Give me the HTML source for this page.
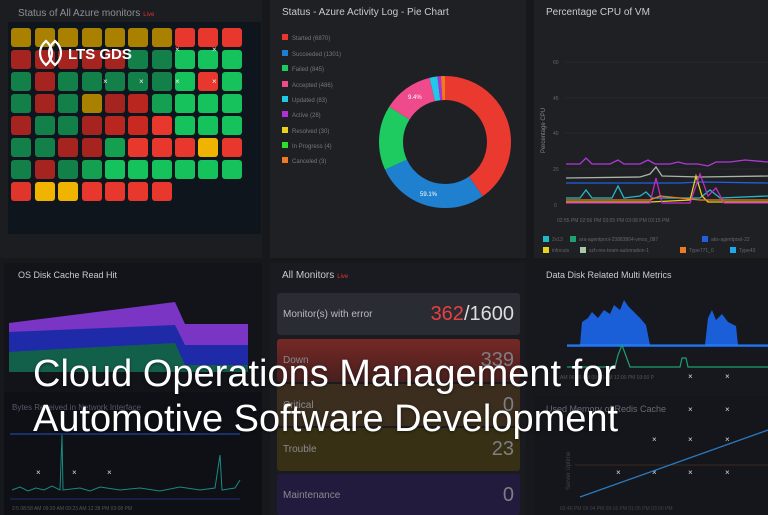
<!DOCTYPE html>
<html><head><meta charset="utf-8"><style>
*{margin:0;padding:0;box-sizing:border-box}
body{width:768px;height:515px;overflow:hidden;background:#17181c;font-family:"Liberation Sans",sans-serif;position:relative}
.p{position:absolute;background:#1f2024}
.t{position:absolute;color:#c9cacf;font-size:10px;white-space:nowrap}
.live{color:#d33;font-size:6px;margin-left:3px}
.mon{position:absolute;left:277px;width:243px;color:#8a8a90;font-size:10px;border-radius:3px}
.mon span{position:absolute;left:6px;top:16px}
.mon b{position:absolute;right:6px;top:10px;font-weight:normal;font-size:20px;color:#7e7e84}
.h{position:absolute;left:33px;color:#fff;font-size:38px;letter-spacing:0;line-height:1;white-space:nowrap;text-shadow:0 1px 3px rgba(0,0,0,.5)}
</style></head><body>
<div class="p" style="left:0;top:0;width:262px;height:258px;background:#1c1d21"></div>
<div class="p" style="left:8px;top:22px;width:253px;height:212px;background:#0f151c"></div>
<div class="t" style="left:18px;top:8px;color:#8e9099">Status of All Azure monitors<span class="live">Live</span></div>
<div class="p" style="left:270px;top:0;width:256px;height:258px"></div>
<div class="t" style="left:282px;top:7px">Status - Azure Activity Log - Pie Chart</div>
<div class="p" style="left:534px;top:0;width:234px;height:258px"></div>
<div class="t" style="left:546px;top:7px">Percentage CPU of VM</div>
<div class="p" style="left:4px;top:263px;width:258px;height:252px;background:#121419"></div>
<div class="t" style="left:18px;top:270px;font-size:9px">OS Disk Cache Read Hit</div>
<div class="p" style="left:4px;top:392px;width:258px;height:123px;background:#0e1016"></div>
<div class="t" style="left:12px;top:403px;font-size:8px;color:#555a66">Bytes Received in Network Interface</div>
<div class="p" style="left:270px;top:263px;width:256px;height:252px;background:#1a1b20"></div>
<div class="t" style="left:282px;top:270px">All Monitors<span class="live">Live</span></div>
<div class="p" style="left:534px;top:263px;width:234px;height:130px;background:#17181d"></div>
<div class="t" style="left:546px;top:270px;font-size:9px">Data Disk Related Multi Metrics</div>
<div class="p" style="left:534px;top:396px;width:234px;height:119px;background:#15161b"></div>
<div class="t" style="left:546px;top:404px;font-size:9px;color:#666a75">Used Memory of Redis Cache</div>

<div class="mon" style="top:293px;height:42px;background:#2a2c33;color:#bbb"><span>Monitor(s) with error</span><b style="color:#ddd"><i style="font-style:normal;color:#e84040">362</i>/1600</b></div>
<div class="mon" style="top:339px;height:43px;background:linear-gradient(#762824,#46201e)"><span>Down</span><b>339</b></div>
<div class="mon" style="top:384px;height:42px;background:#3c2e1e"><span>Critical</span><b>0</b></div>
<div class="mon" style="top:428px;height:43px;background:#373015"><span>Trouble</span><b>23</b></div>
<div class="mon" style="top:474px;height:41px;background:#221b3e"><span>Maintenance</span><b>0</b></div>

<svg style="position:absolute;left:0;top:0" width="768" height="515">
<g>
<rect x="11" y="28" width="20" height="19" rx="3" fill="#a98000"/><rect x="35" y="28" width="20" height="19" rx="3" fill="#a98000"/><rect x="58" y="28" width="20" height="19" rx="3" fill="#a98000"/><rect x="82" y="28" width="20" height="19" rx="3" fill="#a98000"/><rect x="105" y="28" width="20" height="19" rx="3" fill="#a98000"/><rect x="128" y="28" width="20" height="19" rx="3" fill="#a98000"/><rect x="152" y="28" width="20" height="19" rx="3" fill="#a98000"/><rect x="175" y="28" width="20" height="19" rx="3" fill="#e8372c"/><rect x="198" y="28" width="20" height="19" rx="3" fill="#e8372c"/><rect x="222" y="28" width="20" height="19" rx="3" fill="#e8372c"/>
<rect x="11" y="50" width="20" height="19" rx="3" fill="#a52420"/><rect x="35" y="50" width="20" height="19" rx="3" fill="#a52420"/><rect x="58" y="50" width="20" height="19" rx="3" fill="#a52420"/><rect x="82" y="50" width="20" height="19" rx="3" fill="#a52420"/><rect x="105" y="50" width="20" height="19" rx="3" fill="#a52420"/><rect x="128" y="50" width="20" height="19" rx="3" fill="#13804a"/><rect x="152" y="50" width="20" height="19" rx="3" fill="#13804a"/><rect x="175" y="50" width="20" height="19" rx="3" fill="#16c25c"/><rect x="198" y="50" width="20" height="19" rx="3" fill="#16c25c"/><rect x="222" y="50" width="20" height="19" rx="3" fill="#16c25c"/>
<rect x="11" y="72" width="20" height="19" rx="3" fill="#13804a"/><rect x="35" y="72" width="20" height="19" rx="3" fill="#a52420"/><rect x="58" y="72" width="20" height="19" rx="3" fill="#13804a"/><rect x="82" y="72" width="20" height="19" rx="3" fill="#13804a"/><rect x="105" y="72" width="20" height="19" rx="3" fill="#13804a"/><rect x="128" y="72" width="20" height="19" rx="3" fill="#13804a"/><rect x="152" y="72" width="20" height="19" rx="3" fill="#13804a"/><rect x="175" y="72" width="20" height="19" rx="3" fill="#16c25c"/><rect x="198" y="72" width="20" height="19" rx="3" fill="#e8372c"/><rect x="222" y="72" width="20" height="19" rx="3" fill="#16c25c"/>
<rect x="11" y="94" width="20" height="19" rx="3" fill="#13804a"/><rect x="35" y="94" width="20" height="19" rx="3" fill="#a52420"/><rect x="58" y="94" width="20" height="19" rx="3" fill="#13804a"/><rect x="82" y="94" width="20" height="19" rx="3" fill="#a98000"/><rect x="105" y="94" width="20" height="19" rx="3" fill="#a52420"/><rect x="128" y="94" width="20" height="19" rx="3" fill="#b8261f"/><rect x="152" y="94" width="20" height="19" rx="3" fill="#14a050"/><rect x="175" y="94" width="20" height="19" rx="3" fill="#16c25c"/><rect x="198" y="94" width="20" height="19" rx="3" fill="#16c25c"/><rect x="222" y="94" width="20" height="19" rx="3" fill="#16c25c"/>
<rect x="11" y="116" width="20" height="19" rx="3" fill="#a52420"/><rect x="35" y="116" width="20" height="19" rx="3" fill="#13804a"/><rect x="58" y="116" width="20" height="19" rx="3" fill="#13804a"/><rect x="82" y="116" width="20" height="19" rx="3" fill="#a52420"/><rect x="105" y="116" width="20" height="19" rx="3" fill="#b8261f"/><rect x="128" y="116" width="20" height="19" rx="3" fill="#c82a22"/><rect x="152" y="116" width="20" height="19" rx="3" fill="#e8372c"/><rect x="175" y="116" width="20" height="19" rx="3" fill="#16c25c"/><rect x="198" y="116" width="20" height="19" rx="3" fill="#16c25c"/><rect x="222" y="116" width="20" height="19" rx="3" fill="#16c25c"/>
<rect x="11" y="138" width="20" height="19" rx="3" fill="#13804a"/><rect x="35" y="138" width="20" height="19" rx="3" fill="#13804a"/><rect x="58" y="138" width="20" height="19" rx="3" fill="#a52420"/><rect x="82" y="138" width="20" height="19" rx="3" fill="#a52420"/><rect x="105" y="138" width="20" height="19" rx="3" fill="#14a050"/><rect x="128" y="138" width="20" height="19" rx="3" fill="#e8372c"/><rect x="152" y="138" width="20" height="19" rx="3" fill="#e8372c"/><rect x="175" y="138" width="20" height="19" rx="3" fill="#e8372c"/><rect x="198" y="138" width="20" height="19" rx="3" fill="#f0b400"/><rect x="222" y="138" width="20" height="19" rx="3" fill="#e8372c"/>
<rect x="11" y="160" width="20" height="19" rx="3" fill="#13804a"/><rect x="35" y="160" width="20" height="19" rx="3" fill="#a52420"/><rect x="58" y="160" width="20" height="19" rx="3" fill="#13804a"/><rect x="82" y="160" width="20" height="19" rx="3" fill="#14a050"/><rect x="105" y="160" width="20" height="19" rx="3" fill="#16c25c"/><rect x="128" y="160" width="20" height="19" rx="3" fill="#16c25c"/><rect x="152" y="160" width="20" height="19" rx="3" fill="#16c25c"/><rect x="175" y="160" width="20" height="19" rx="3" fill="#16c25c"/><rect x="198" y="160" width="20" height="19" rx="3" fill="#16c25c"/><rect x="222" y="160" width="20" height="19" rx="3" fill="#16c25c"/>
<rect x="11" y="182" width="20" height="19" rx="3" fill="#e0352a"/><rect x="35" y="182" width="20" height="19" rx="3" fill="#f0b400"/><rect x="58" y="182" width="20" height="19" rx="3" fill="#f0b400"/><rect x="82" y="182" width="20" height="19" rx="3" fill="#e8372c"/><rect x="105" y="182" width="20" height="19" rx="3" fill="#e8372c"/><rect x="128" y="182" width="20" height="19" rx="3" fill="#e8372c"/><rect x="152" y="182" width="20" height="19" rx="3" fill="#e8372c"/>
</g>
<g fill="#eee" font-size="8"><text x="175" y="52">×</text><text x="212" y="52">×</text><text x="103" y="84">×</text><text x="139" y="84">×</text><text x="175" y="84">×</text><text x="212" y="84">×</text></g>
<g fill="none" stroke="#fff" stroke-width="2.2">
<path d="M46 41 C38 48 38 58 46 65 C54 58 54 48 46 41Z"/>
<path d="M55 41 C47 48 47 58 55 65 C63 58 63 48 55 41Z"/>
</g>
<text x="68" y="59" fill="#fff" font-size="15" font-weight="bold">LTS GDS</text>

<g font-size="6" fill="#777">
<rect x="282" y="34" width="6" height="6" fill="#e8372c"/><text x="292" y="40">Started (6870)</text>
<rect x="282" y="50" width="6" height="6" fill="#1e7fd0"/><text x="292" y="56">Succeeded (1301)</text>
<rect x="282" y="65" width="6" height="6" fill="#1ecb60"/><text x="292" y="71">Failed (845)</text>
<rect x="282" y="81" width="6" height="6" fill="#ef4b8c"/><text x="292" y="87">Accepted (486)</text>
<rect x="282" y="96" width="6" height="6" fill="#22c8e8"/><text x="292" y="102">Updated (83)</text>
<rect x="282" y="111" width="6" height="6" fill="#b02fd8"/><text x="292" y="117">Active (28)</text>
<rect x="282" y="127" width="6" height="6" fill="#e8d21e"/><text x="292" y="133">Resolved (30)</text>
<rect x="282" y="142" width="6" height="6" fill="#2ee02e"/><text x="292" y="148">In Progress (4)</text>
<rect x="282" y="157" width="6" height="6" fill="#f07a22"/><text x="292" y="163">Canceled (3)</text>
</g>
<g transform="translate(445,142) rotate(-90)" fill="none" stroke-width="24">
<circle r="54" stroke="#ea3a30" stroke-dasharray="136.7 400"/>
<circle r="54" stroke="#1f80cf" stroke-dasharray="94.2 400" stroke-dashoffset="-136.7"/>
<circle r="54" stroke="#1ecb60" stroke-dasharray="53.7 400" stroke-dashoffset="-230.9"/>
<circle r="54" stroke="#ef4b8c" stroke-dasharray="41.5 400" stroke-dashoffset="-284.6"/>
<circle r="54" stroke="#22c8e8" stroke-dasharray="6.6 400" stroke-dashoffset="-326.1"/>
<circle r="54" stroke="#b02fd8" stroke-dasharray="2.8 400" stroke-dashoffset="-332.7"/>
<circle r="54" stroke="#f07a22" stroke-dasharray="3.8 400" stroke-dashoffset="-335.5"/>
</g>
<text x="408" y="99" fill="#fff" font-size="6">9.4%</text>
<text x="420" y="196" fill="#fff" font-size="6">59.1%</text>

<g stroke="#2e2f35" stroke-width="0.5">
<line x1="565" y1="62" x2="768" y2="62"/><line x1="565" y1="98" x2="768" y2="98"/><line x1="565" y1="133" x2="768" y2="133"/><line x1="565" y1="169" x2="768" y2="169"/>
</g>
<g font-size="5" fill="#666"><text x="553" y="64">60</text><text x="553" y="100">45</text><text x="553" y="135">40</text><text x="553" y="171">20</text><text x="554" y="207">0</text>
<text x="557" y="222">02:55 PM   02:56 PM   03:05 PM   03:08 PM   03:15 PM</text></g>
<text transform="translate(545,153) rotate(-90)" font-size="6" fill="#888">Percentage CPU</text>
<g fill="none" stroke-width="1.3">
<polyline stroke="#b038d8" points="566,164 580,164 586,158 592,164 610,164 618,160 624,164 640,164 648,160 655,164 670,164 678,162 686,164 698,164 708,166 716,162 730,162 745,160 768,162"/>
<polyline stroke="#aab3a8" points="566,178 640,177 650,174 656,167 662,176 700,177 768,176"/>
<polyline stroke="#2060e0" points="566,183 640,183 680,183 700,182 768,183"/>
<polyline stroke="#22b8c8" points="566,198 580,198 586,190 592,198 612,198 618,186 624,198 640,196 646,192 652,198 700,198 710,190 720,198 768,196"/>
<polyline stroke="#e8d21e" points="566,202 650,202 690,200 696,176 702,196 708,202 768,202"/>
<polyline stroke="#c028c8" points="566,203 650,203 656,178 662,203 690,203 700,174 708,196 716,188 724,203 768,203"/>
<polyline stroke="#f07a22" points="566,200 650,200 660,196 700,200 768,200"/>
</g>
<g font-size="5" fill="#666">
<rect x="543" y="236" width="6" height="6" fill="#22b8c8"/><text x="552" y="241">2v13</text>
<rect x="570" y="236" width="6" height="6" fill="#1ea070"/><text x="579" y="241">ara-agentpool-23883804-vmss_087</text>
<rect x="702" y="236" width="6" height="6" fill="#2060e0"/><text x="711" y="241">aks-agentpool-22</text>
<rect x="543" y="247" width="6" height="6" fill="#e8d21e"/><text x="552" y="252">infocuts</text>
<rect x="580" y="247" width="6" height="6" fill="#aac8aa"/><text x="589" y="252">szh-res-team-automation-1</text>
<rect x="680" y="247" width="6" height="6" fill="#f07a22"/><text x="689" y="252">Type771_0</text>
<rect x="730" y="247" width="6" height="6" fill="#22a8e8"/><text x="739" y="252">Type43</text>
</g>

<polygon fill="#7a35c4" points="9,323 175,302 185,324 248,324 248,372 9,372"/>
<polygon fill="#1e2aa8" points="9,332 175,325 185,345 248,345 248,372 9,372"/>
<polygon fill="#13604a" points="9,352 60,349 175,343 185,365 248,365 248,372 9,372"/>

<line x1="10" y1="434" x2="240" y2="434" stroke="#1e3a8a" stroke-width="1.5"/>
<polyline fill="none" stroke="#1a8a80" stroke-width="1" points="12,490 20,487 28,491 36,488 44,490 52,486 60,490 62,435 63,490 80,488 90,491 100,487 120,490 140,488 160,491 180,487 200,490 215,488 220,455 222,490 235,488 240,480"/>
<line x1="10" y1="499" x2="240" y2="499" stroke="#1e3a8a" stroke-width="0.7"/>
<g fill="#ddd" font-size="8"><text x="36" y="475">×</text><text x="72" y="475">×</text><text x="107" y="475">×</text></g>
<text x="12" y="510" font-size="5" fill="#555">2:5       08:58 AM     09:20 AM     09:23 AM     12:38 PM     03:08 PM</text>

<polygon fill="#1a5ed8" points="567,345 580,345 582,322 588,318 592,312 598,318 604,310 610,314 614,305 620,310 624,300 628,306 634,312 640,318 646,325 650,345 705,345 708,318 712,310 716,320 722,314 728,322 736,326 738,345 768,345 768,347 567,347"/>
<polyline fill="none" stroke="#2a8cff" stroke-width="1" points="567,345 768,345"/>
<polyline fill="none" stroke="#1ea070" stroke-width="1.2" points="567,367 615,367 618,355 622,345 626,356 630,367 680,367 682,358 686,358 688,367 768,367"/>
<text x="560" y="379" font-size="5" fill="#555">AM   06:00 AM    09:00 AM    12:00 PM    03:00 P</text>
<g fill="#ddd" font-size="8"><text x="688" y="379">×</text><text x="725" y="379">×</text><text x="688" y="412">×</text><text x="725" y="412">×</text><text x="652" y="442">×</text><text x="688" y="442">×</text><text x="725" y="442">×</text><text x="616" y="475">×</text><text x="652" y="475">×</text><text x="688" y="475">×</text><text x="725" y="475">×</text></g>
<line x1="575" y1="465" x2="768" y2="465" stroke="#3a2a1a" stroke-width="1"/>
<line x1="580" y1="497" x2="768" y2="430" stroke="#2a7ac0" stroke-width="1.3"/>
<text transform="translate(570,490) rotate(-90)" font-size="6" fill="#444">Server Uptime</text>
<text x="560" y="510" font-size="5" fill="#444">02:40 PM   06:04 PM   09:16 PM   01:05 PM   03:00 PM</text>
</svg>
<div class="h" style="top:355px">Cloud Operations Management for</div>
<div class="h" style="top:400px">Automotive Software Development</div>
</body></html>
